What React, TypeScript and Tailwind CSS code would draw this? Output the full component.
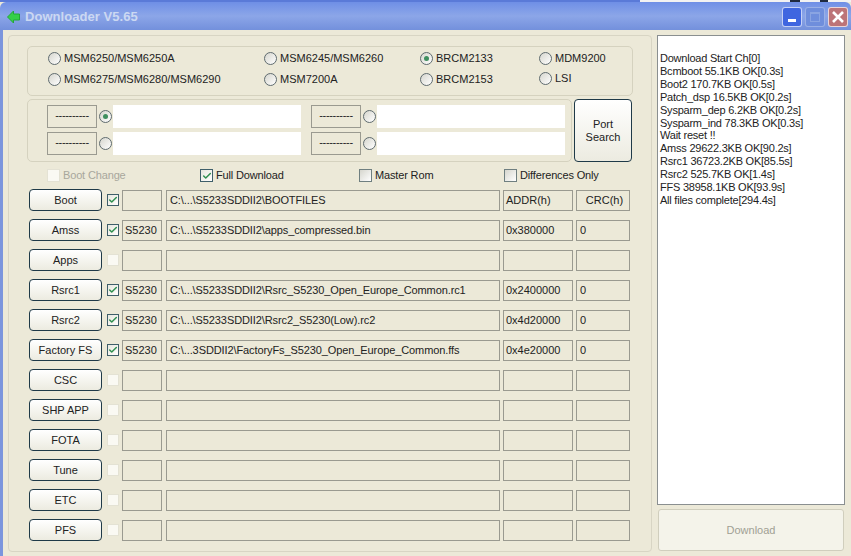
import { Check } from "lucide-react";

const font = "font-['Liberation_Sans',sans-serif]";

const rows = [
  { name: "Boot", on: true, code: "", path: "C:\\...\\S5233SDDII2\\BOOTFILES", addr: "ADDR(h)", crc: "CRC(h)" },
  { name: "Amss", on: true, code: "S5230", path: "C:\\...\\S5233SDDII2\\apps_compressed.bin", addr: "0x380000", crc: "0" },
  { name: "Apps", on: false, code: "", path: "", addr: "", crc: "" },
  { name: "Rsrc1", on: true, code: "S5230", path: "C:\\...\\S5233SDDII2\\Rsrc_S5230_Open_Europe_Common.rc1", addr: "0x2400000", crc: "0" },
  { name: "Rsrc2", on: true, code: "S5230", path: "C:\\...\\S5233SDDII2\\Rsrc2_S5230(Low).rc2", addr: "0x4d20000", crc: "0" },
  { name: "Factory FS", on: true, code: "S5230", path: "C:\\...3SDDII2\\FactoryFs_S5230_Open_Europe_Common.ffs", addr: "0x4e20000", crc: "0" },
  { name: "CSC", on: false, code: "", path: "", addr: "", crc: "" },
  { name: "SHP APP", on: false, code: "", path: "", addr: "", crc: "" },
  { name: "FOTA", on: false, code: "", path: "", addr: "", crc: "" },
  { name: "Tune", on: false, code: "", path: "", addr: "", crc: "" },
  { name: "ETC", on: false, code: "", path: "", addr: "", crc: "" },
  { name: "PFS", on: false, code: "", path: "", addr: "", crc: "" },
];

const logLines = [
  "Download Start Ch[0]",
  "Bcmboot 55.1KB OK[0.3s]",
  "Boot2 170.7KB OK[0.5s]",
  "Patch_dsp 16.5KB OK[0.2s]",
  "Sysparm_dep 6.2KB OK[0.2s]",
  "Sysparm_ind 78.3KB OK[0.3s]",
  "Wait reset !!",
  "Amss 29622.3KB OK[90.2s]",
  "Rsrc1 36723.2KB OK[85.5s]",
  "Rsrc2 525.7KB OK[1.4s]",
  "FFS 38958.1KB OK[93.9s]",
  "All files complete[294.4s]",
];

function Radio({ on = false }: { on?: boolean }) {
  return (
    <span className="w-[13px] h-[13px] shrink-0 rounded-full border border-[#5f6b6f] bg-gradient-to-br from-[#d6d6ce] to-[#ffffff] flex items-center justify-center">
      {on && <span className="w-[5px] h-[5px] rounded-full bg-[#3f8f5f]" />}
    </span>
  );
}

function RadioLabel({ label, on, className }: { label: string; on?: boolean; className: string }) {
  return (
    <div className={`flex items-center gap-[3px] ${className}`}>
      <Radio on={on} />
      <span className="whitespace-nowrap">{label}</span>
    </div>
  );
}

function Box({ children, className }: { children?: React.ReactNode; className: string }) {
  return (
    <div className={`mt-[1px] h-[21px] pb-[1px] border border-[#9a9a90] flex items-center whitespace-nowrap overflow-hidden ${className}`}>
      {children}
    </div>
  );
}

function CheckBox({ on, disabled, className = "" }: { on?: boolean; disabled?: boolean; className?: string }) {
  const look = disabled
    ? "border border-[#e4e2d4] bg-[#faf9f3]"
    : on
      ? "border border-[#3f5f6a] bg-gradient-to-br from-[#e6e6dd] to-white"
      : "border border-[#6f7f80] bg-gradient-to-br from-[#d6d6ce] to-white";
  return (
    <span className={`shrink-0 flex items-center justify-center ${look} ${className}`}>
      {on && <Check className="w-[10px] h-[10px] text-[#2f8f4f]" strokeWidth={3.5} />}
    </span>
  );
}

function PortRow({ checked }: { checked?: boolean }) {
  return (
    <div className="flex items-center">
      <div className="w-[50px] h-[23px] border border-[#9a9a90] flex items-center justify-center pb-[3px] tracking-[-0.3px]">----------</div>
      <span className="w-[2px]" />
      <Radio on={checked} />
      <span className="w-[1px]" />
      <div className="w-[188px] h-[23px] bg-white" />
    </div>
  );
}

export default function App() {
  return (
    <div className={`w-[851px] h-[556px] overflow-hidden flex flex-col bg-[#ece9d8] text-[11px] leading-[14px] text-[#222222] ${font}`}>
      {/* 顶部露出的桌面 */}
      <div className="h-[2px] shrink-0 flex bg-[#3f5fc8]">
        <span className="w-[640px] bg-[#5a7ad8]" />
        <span className="w-[150px] bg-[#f2f2f2]" />
        <span className="w-[10px] bg-[#1f2a40]" />
        <span className="w-[20px] bg-[#f2f2f2]" />
        <span className="w-[8px] bg-[#1f2a40]" />
        <span className="flex-1 bg-[#f2f2f2]" />
      </div>

      {/* 标题栏 */}
      <div className="h-[28px] shrink-0 rounded-t-[6px] flex items-center pl-[7px] pr-[3px] pt-[1px] bg-gradient-to-b from-[#6f8fe6] via-[#8ca6e8] to-[#7390dc]">
        <svg width="13" height="14" viewBox="0 0 13 14">
          <path d="M0.5 7 L6.5 1 V4 H12.5 V10 H6.5 V13 Z" fill="#35d048" stroke="#22a838" />
        </svg>
        <span className="ml-[5px] text-[13px] font-bold text-[#cbd8f2] tracking-[0.05px]">Downloader V5.65</span>
        <div className="ml-auto flex items-center gap-[3px]">
          <div className="w-[20px] h-[20px] rounded-[3px] border border-white/70 bg-[#3f66e0] flex items-end pl-[5px] pb-[4px]">
            <span className="w-[8px] h-[3px] bg-white" />
          </div>
          <div className="w-[20px] h-[20px] rounded-[3px] border border-white/30 bg-[#6f8edc] flex items-center justify-center">
            <span className="w-[10px] h-[10px] border border-[#8aa4e2] border-t-2" />
          </div>
          <div className="w-[20px] h-[20px] rounded-[3px] border border-white/70 bg-[#bd7478] flex items-center justify-center">
            <svg width="14" height="14" viewBox="0 0 14 14">
              <path d="M2 2 L12 12 M12 2 L2 12" stroke="#ffffff" strokeWidth="2.6" />
            </svg>
          </div>
        </div>
      </div>

      <div className="flex-1 flex border-l-[3px] border-[#7b95dd] pl-[5px] pt-[5px] min-h-0">
        {/* 左侧面板 */}
        <div className="w-[644px] h-[517px] shrink-0 rounded-[4px] border border-[#d8d5c4] pl-[18px] pt-[10px]">
          <div className="w-[606px] h-[50px] rounded-[5px] border border-[#d5d2bf] pl-[20px] pt-[4px] flex flex-col gap-[7px]">
            <div className="flex items-center h-[14px]">
              <RadioLabel label="MSM6250/MSM6250A" className="w-[216px]" />
              <RadioLabel label="MSM6245/MSM6260" className="w-[156px]" />
              <RadioLabel label="BRCM2133" on className="w-[119px]" />
              <RadioLabel label="MDM9200" className="w-[80px]" />
            </div>
            <div className="flex items-center h-[14px]">
              <RadioLabel label="MSM6275/MSM6280/MSM6290" className="w-[216px]" />
              <RadioLabel label="MSM7200A" className="w-[156px]" />
              <RadioLabel label="BRCM2153" className="w-[119px]" />
              <RadioLabel label="LSI" className="w-[80px] mb-[2px]" />
            </div>
          </div>

          <div className="flex mt-[3px] gap-[2px] h-[63px]">
            <div className="w-[545px] rounded-[5px] border border-[#d5d2bf] pl-[19px] pt-[5px] flex flex-col gap-[4px]">
              <div className="flex gap-[10px]">
                <PortRow checked />
                <PortRow />
              </div>
              <div className="flex gap-[10px]">
                <PortRow />
                <PortRow />
              </div>
            </div>
            <button className="w-[58px] h-[63px] rounded-[4px] border border-[#1f3a48] bg-gradient-to-b from-white to-[#ecebe0] leading-[13px]">
              Port
              <br />
              Search
            </button>
          </div>

          <div className="flex items-center h-[13px] mt-[7px] tracking-[-0.15px]">
            <div className="w-[173px] flex items-center gap-[3px] pl-[20px] text-[#a8a79c]">
              <CheckBox disabled className="w-[13px] h-[13px]" />
              <span className="mb-[2px]">Boot Change</span>
            </div>
            <div className="w-[159px] flex items-center gap-[3px]">
              <CheckBox on className="w-[13px] h-[13px]" />
              <span className="mb-[2px]">Full Download</span>
            </div>
            <div className="w-[145px] flex items-center gap-[3px]">
              <CheckBox className="w-[13px] h-[13px]" />
              <span className="mb-[2px]">Master Rom</span>
            </div>
            <div className="flex items-center gap-[3px]">
              <CheckBox className="w-[13px] h-[13px]" />
              <span className="mb-[2px]">Differences Only</span>
            </div>
          </div>

          <div className="mt-[7px] flex flex-col gap-[8px]">
            {rows.map((r) => (
              <div key={r.name} className="flex items-start h-[22px]">
                <button className="w-[73px] h-[22px] ml-[2px] rounded-[4px] border border-[#1f3a48] bg-gradient-to-b from-white to-[#ecebe0]">
                  {r.name}
                </button>
                <CheckBox on={r.on} disabled={!r.on} className="w-[12px] h-[12px] ml-[5px] mt-[5px]" />
                <Box className="w-[40px] ml-[3px] pl-[2px]">{r.code}</Box>
                <Box className="w-[334px] ml-[4px] pl-[3px] tracking-[-0.1px]">{r.path}</Box>
                <Box className="w-[70px] ml-[3px] pl-[2px]">{r.addr}</Box>
                <Box className={`w-[54px] ml-[3px] pl-[3px] ${r.name === "Boot" ? "justify-center" : ""}`}>{r.crc}</Box>
              </div>
            ))}
          </div>
        </div>

        {/* 右侧日志 */}
        <div className="ml-[5px] w-[188px] flex flex-col">
          <div className="h-[470px] border border-[#8a8f90] bg-white pl-[2px] pt-[16px] leading-[12.9px] tracking-[-0.23px]">
            {logLines.map((line) => (
              <div key={line} className="whitespace-nowrap">{line}</div>
            ))}
          </div>
          <button className="mt-[4px] mx-[1px] h-[42px] rounded-[3px] border border-[#d0cebd] bg-[#f4f3ea] text-[#a0a094]">
            Download
          </button>
        </div>
      </div>
    </div>
  );
}
